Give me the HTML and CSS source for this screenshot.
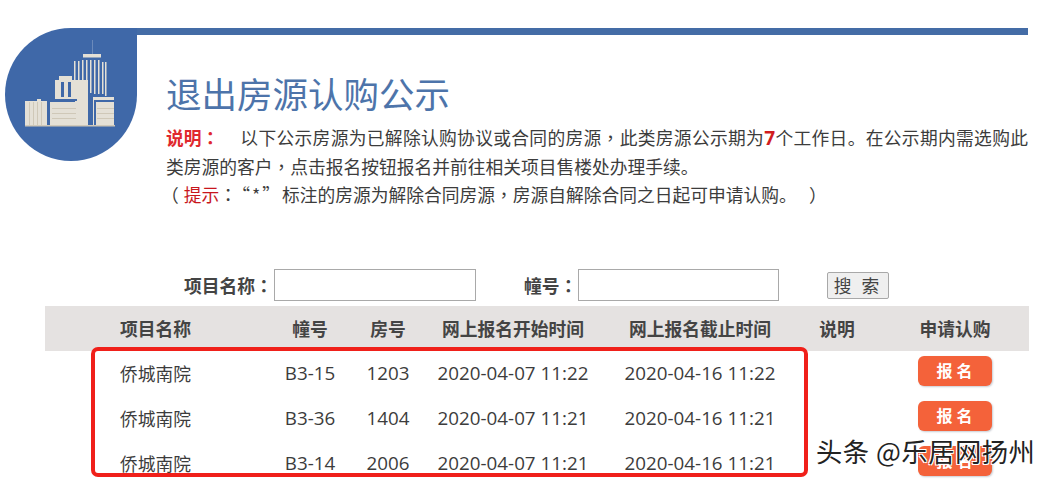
FILE: index.html
```html
<!DOCTYPE html>
<html lang="zh">
<head>
<meta charset="utf-8">
<title>退出房源认购公示</title>
<link rel="stylesheet" href="styles.css">
</head>
<body>
<div class="page">
  <header class="head">
    <div class="logo">
      <svg viewBox="5 28 132 133" width="132" height="133">
        <g fill="#e4e0d6">
          <rect x="92" y="40" width="1" height="14" fill="#6b8abb"/>
          <rect x="83" y="54" width="18" height="3.5"/>
          <rect x="74" y="61" width="1.5" height="36"/>
          <rect x="78" y="61" width="1.5" height="20"/>
          <rect x="82" y="60" width="1.5" height="22"/>
          <rect x="86" y="60" width="1.5" height="34"/>
          <rect x="90" y="60" width="1.5" height="34"/>
          <rect x="94" y="60" width="1.5" height="34"/>
          <rect x="98" y="60" width="1.5" height="34"/>
          <rect x="102" y="62" width="1.5" height="32"/>
          <rect x="105" y="62" width="1.5" height="34"/>
          <rect x="93" y="97" width="21" height="29"/>
          <rect x="75" y="80" width="13" height="46"/>
          <rect x="55" y="80" width="21" height="19" />
          <rect x="59" y="76" width="13" height="4"/>
          <rect x="50" y="102" width="27" height="24"/>
          <rect x="25" y="101" width="22" height="25"/>
          <rect x="37" y="99" width="4" height="3"/>
        </g>
        <g fill="#3f68a8">
          <rect x="61" y="82" width="3" height="15"/>
          <rect x="68" y="82" width="3" height="15"/>
          <rect x="53" y="99" width="24" height="2"/>
          <rect x="47" y="103" width="3" height="23"/>
          <rect x="88" y="93" width="5" height="33"/>
          <rect x="95" y="100" width="19" height="2"/>
          <rect x="94" y="100" width="2" height="26"/>
        </g>
        <g fill="#cfc8b8">
          <rect x="29" y="102" width="1" height="23"/>
          <rect x="33" y="102" width="1" height="23"/>
          <rect x="37" y="102" width="1" height="23"/>
          <rect x="41" y="102" width="1" height="23"/>
          <rect x="52" y="108" width="24" height="1"/>
          <rect x="52" y="113" width="24" height="1"/>
          <rect x="52" y="118" width="24" height="1"/>
          <rect x="97" y="108" width="17" height="1"/>
          <rect x="97" y="113" width="17" height="1"/>
          <rect x="97" y="118" width="17" height="1"/>
          <rect x="25" y="125" width="90" height="1.5"/>
        </g>
      </svg>
    </div>
    <div class="intro">
      <h1 class="title">退出房源认购公示</h1>
      <p class="note"><b class="note-label">说明<span class="mid" lang="zh-Hant">：</span></b>以下公示房源为已解除认购协议或合同的房源<span class="mid" lang="zh-Hant">，</span>此类房源公示期为<b class="days">7</b>个工作日。在公示期内需选购此类房源的客户<span class="mid" lang="zh-Hant">，</span>点击报名按钮报名并前往相关项目售楼处办理手续。</p>
      <p class="hint"><span class="mid open" lang="zh-Hant">（</span><span class="hint-label">提示</span><span class="mid" lang="zh-Hant">：</span><span class="quote">“*”</span>标注的房源为解除合同房源<span class="mid" lang="zh-Hant">，</span>房源自解除合同之日起可申请认购。<span class="mid close" lang="zh-Hant">）</span></p>
    </div>
  </header>

  <form class="search">
    <label class="search-label label-name">项目名称<span class="mid" lang="zh-Hant">：</span></label>
    <input class="search-input input-name" type="text">
    <label class="search-label label-bldg">幢号<span class="mid" lang="zh-Hant">：</span></label>
    <input class="search-input input-bldg" type="text">
    <button class="search-btn" type="button">搜 索</button>
  </form>

  <div class="table">
    <div class="row row-head">
      <div class="cell-name">项目名称</div><div>幢号</div><div>房号</div><div>网上报名开始时间</div><div>网上报名截止时间</div><div>说明</div><div>申请认购</div>
    </div>
    <div class="row">
      <div class="cell-name">侨城南院</div><div class="num">B3-15</div><div class="num">1203</div><div class="num">2020-04-07 11:22</div><div class="num">2020-04-16 11:22</div><div></div><div class="cell-apply"><span class="apply">报名</span></div>
    </div>
    <div class="row">
      <div class="cell-name">侨城南院</div><div class="num">B3-36</div><div class="num">1404</div><div class="num">2020-04-07 11:21</div><div class="num">2020-04-16 11:21</div><div></div><div class="cell-apply"><span class="apply">报名</span></div>
    </div>
    <div class="row">
      <div class="cell-name">侨城南院</div><div class="num">B3-14</div><div class="num">2006</div><div class="num">2020-04-07 11:21</div><div class="num">2020-04-16 11:21</div><div></div><div class="cell-apply"><span class="apply">报名</span></div>
    </div>
  </div>

  <div class="annotation"></div>
  <div class="watermark">头条 @乐居网扬州</div>
</div>
</body>
</html>
```

FILE: styles.css
```css
* { box-sizing: border-box; }
html, body { margin: 0; padding: 0; background: #fff; }
body {
  width: 1049px;
  height: 481px;
  overflow: hidden;
  font-family: "Noto Sans CJK SC", sans-serif;
  color: #3c3c3c;
}
.page { position: relative; width: 1049px; height: 481px; padding-top: 28px; }

.head { display: flex; margin-left: 5px; width: 1023px; height: 241px; }
.logo {
  width: 132px;
  height: 133px;
  flex: none;
  background: #3f68a8;
  border-radius: 50% 0 50% 50%;
  overflow: hidden;
}
.logo svg { display: block; }
.intro {
  flex: 1;
  min-width: 0;
  border-top: 7px solid #446ca6;
  padding-left: 29px;
}
.title {
  margin: 36px 0 0;
  font-size: 35.5px;
  line-height: 44px;
  font-weight: 400;
  color: #4d74aa;
}
.note, .hint {
  margin: 0;
  font-size: 17.75px;
  line-height: 28px;
}
.note { margin-top: 8px; text-align: justify; }
.note-label { color: #e0282e; display: inline-block; width: 74px; }
.days { color: #d01c1f; font-family: "Open Sans", sans-serif; font-size: 19px; }
.hint { margin-top: 0; }
.hint-label { color: #c8161d; }
.mid { font-family: "Noto Sans CJK TC", sans-serif; }
.open { margin-left: -5px; margin-right: 5px; }
.close { margin-left: 21px; }
.quote { font-family: "Noto Sans CJK TC", sans-serif; letter-spacing: 2px; margin-left: 4px; }

.search { display: flex; align-items: center; height: 32px; padding-left: 184px; }
.search-label { font-size: 17.75px; font-weight: 700; line-height: 32px; color: #444; white-space: nowrap; }
.label-name { width: 90px; }
.label-bldg { width: 54px; margin-left: 48px; }
.search-input {
  height: 32px;
  border: 1px solid #a9a9a9;
  background: #fff;
  padding: 0;
}
.input-name { width: 202px; }
.input-bldg { width: 201px; }
.search-btn {
  width: 62px;
  height: 27px;
  margin-left: 48px;
  border: 1px solid #a8a8a8;
  border-radius: 2px;
  background: #efefef;
  font: 17.75px/25px "Noto Sans CJK SC", sans-serif;
  letter-spacing: 3px;
  color: #444;
  padding: 0;
}

.table { margin: 5px 0 0 45px; width: 984px; }
.row {
  display: grid;
  grid-template-columns: 218px 94px 62px 188px 186px 88px 148px;
  height: 45px;
  align-items: center;
  text-align: center;
  font-size: 17.75px;
  line-height: 41px;
}
.row-head { background: #e5e2e1; font-weight: 700; color: #444; }
.cell-name { text-align: left; padding-left: 75px; }
.num { font-family: "Open Sans", sans-serif; font-size: 18.8px; }
.cell-apply { display: flex; justify-content: center; }
.apply {
  display: block;
  width: 74px;
  height: 30px;
  padding-left: 3px;
  position: relative;
  top: -3px;
  border-radius: 6px;
  background: #f4623a;
  box-shadow: 1px 1px 2px #c9ccd2;
  color: #fff;
  font-size: 16px;
  font-weight: 700;
  line-height: 28px;
  letter-spacing: 4px;
}

.annotation {
  position: absolute;
  left: 91px;
  top: 347px;
  width: 717px;
  height: 130px;
  border: 4px solid #f0201a;
  border-radius: 7px;
}
.watermark {
  position: absolute;
  left: 816px;
  top: 434px;
  font-size: 26.3px;
  letter-spacing: 0.5px;
  line-height: 34px;
  color: #222;
  text-shadow: 1px 1px 0 #fff, -1px -1px 0 #fff, 1px -1px 0 #fff, -1px 1px 0 #fff;
  white-space: nowrap;
}
```
